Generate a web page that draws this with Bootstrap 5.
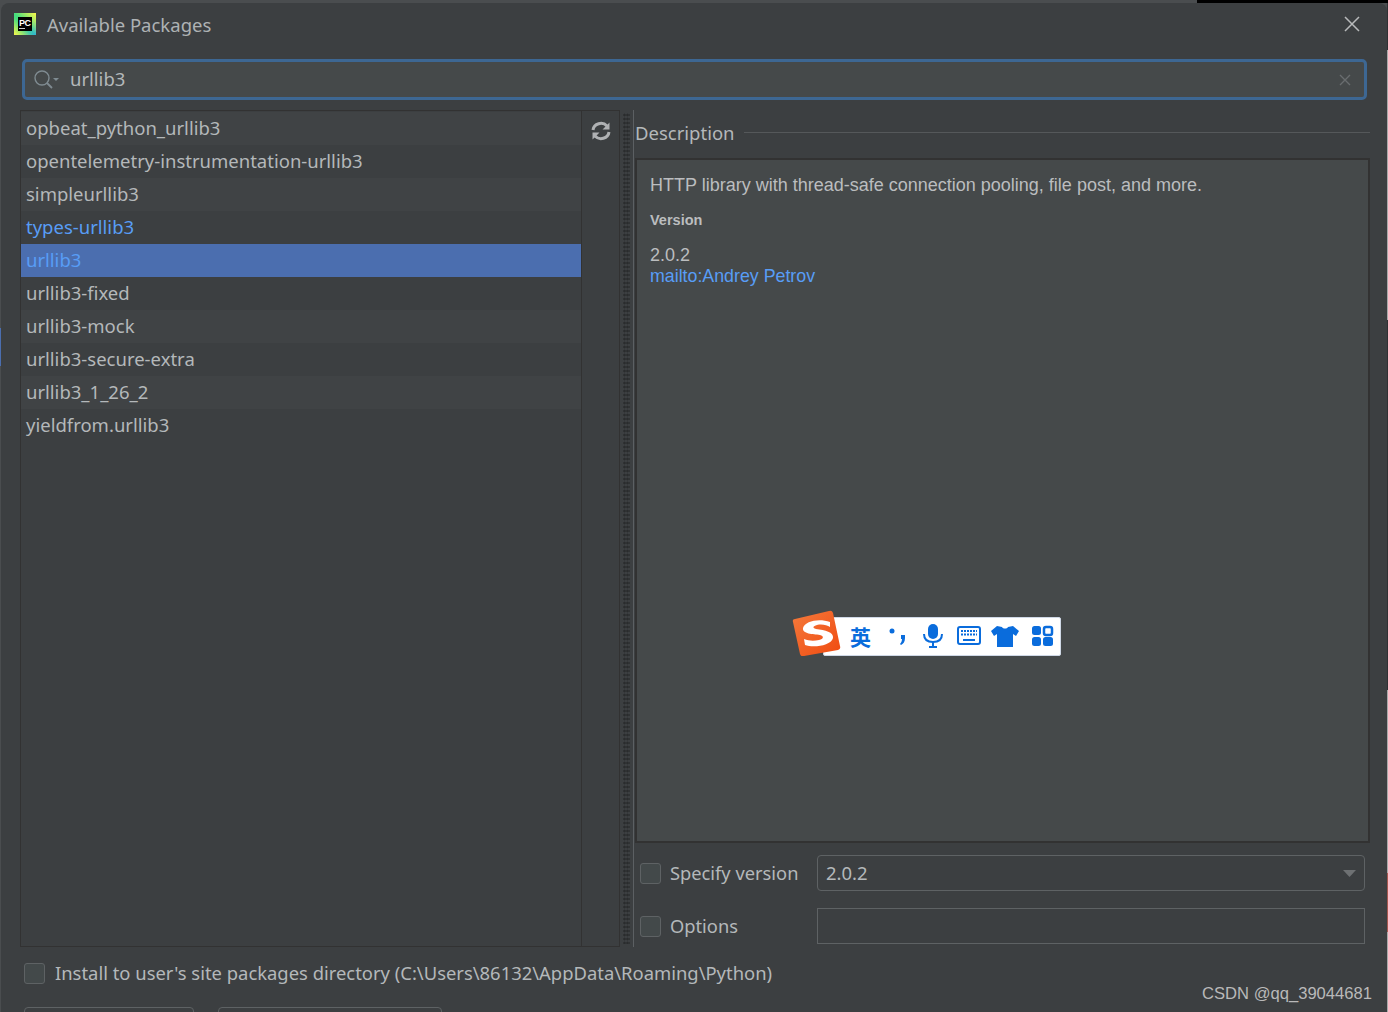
<!DOCTYPE html>
<html lang="en">
<head>
  <meta charset="UTF-8" />
  <title>Available Packages</title>
  <link href="https://cdn.jsdelivr.net/npm/bootstrap@5.3.3/dist/css/bootstrap.min.css" rel="stylesheet">
  <style>
    html, body { height: 100%; overflow: hidden; }
    body {
      font-family: "Noto Sans", "Open Sans", sans-serif; color: #b4b8ba; font-size: 18.5px; line-height: 1.2;
      background:
        linear-gradient(#000, #000) right top / 191px 3px no-repeat,
        linear-gradient(#4b6eaf, #4b6eaf) left 328px / 1px 38px no-repeat,
        linear-gradient(#2f3133 50px, #a9a9a9 50px, #a9a9a9 320px, #2f3133 320px, #2f3133 690px, #a9a9a9 690px, #a9a9a9 873px, #a5574f 873px, #a5574f 932px, #a9a9a9 932px) right top / 1px 100% no-repeat,
        #4a4d4f;
    }
    .dlg { height: 1009px; margin: 3px 1px 0 1px; background: #3c3f41; border-radius: 8px 8px 0 0; position: relative; overflow: hidden; }
    .dlg-head { height: 45px; padding: 0 27px 4px 13px; }
    .dlg-title { color: #aeb2b4; margin-left: 11px; padding-top: 3px; }
    .search-box { height: 41px; margin: 11px 20px 0 21px; background: #45494a; border: 3px solid #3d6793; border-radius: 5px; padding: 0 9px; }
    .search-box span { margin-left: 10px; color: #b4b8ba; }
    .main-area { height: 837px; margin: 10px 17px 0 19px; }
    .pkg-pane { width: 600px; border: 1px solid #323232; border-right-width: 0; }
    .pkg-list { width: 561px; background: #3c3f41; border-right: 1px solid #323232; padding-top: 1px; flex-shrink: 0; }
    .pkg-row { height: 33px; line-height: 31px; padding-left: 5px; white-space: nowrap; }
    .pkg-row.alt { background: #404345; }
    .pkg-row.installable { color: #589df6; }
    .pkg-row.chosen { background: #4b6eaf; color: #589df6; }
    .pkg-tools { width: 39px; padding-top: 7px; border-right: 1px solid #323232; }
    .split-bar { width: 14px; border-right: 1px solid #5c6063; padding: 3px; }
    .split-dots { width: 7px; height: 100%; background-image: radial-gradient(#2a2c2d 1px, transparent 1.2px); background-size: 3px 4px; }
    .desc-side { width: 736px; padding-left: 1px; }
    .desc-legend { height: 48px; padding-bottom: 1px; }
    .desc-legend hr { border-color: #55585a; opacity: 1; margin: 0 0 3px 9px; }
    .desc-box { height: 685px; background: #45494a; border: 2px solid #323232; padding: 15px 13px; font-family: "Liberation Sans", Arial, sans-serif; font-size: 18px; color: #bbbdbf; }
    .desc-box b { display: block; font-size: 14.5px; margin: 15px 0 16px; }
    .desc-box a { color: #589df6; text-decoration: none; display: block; font-size: 17.8px; margin-top: -1px; }
    .opt-row { height: 36px; padding-left: 5px; }
    .fake-check { width: 21px; height: 21px; background: #43494a; border: 1px solid #5e6264; border-radius: 3px; flex-shrink: 0; }
    .opt-label { width: 147px; margin-left: 9px; font-size: 18.3px; }
    .opt-field { width: 548px; height: 36px; border: 1px solid #5e6264; padding: 0 8px; }
    .opt-field.combo { border-radius: 4px; }
    .opt-first { margin-top: 12px; }
    .opt-second { margin-top: 17px; }
    .site-row { margin: 15px 0 0 23px; font-size: 18.42px; }
    .site-row span { margin-left: 10px; }
    .foot-btns { position: absolute; left: 23px; top: 1004px; }
    .foot-btn { height: 30px; border: 1px solid #5e6264; border-radius: 4px; background: #3c3f41; }
    .ime-bar { position: absolute; left: 791px; top: 607px; width: 270px; height: 49px; }
    .ime-strip { position: absolute; left: 32px; top: 10px; width: 238px; height: 39px; background: #fff; border: 1px solid #cfd8e6; border-radius: 2px; padding-left: 26px; color: #0a6cdc; }
    .ime-strip .hz { font-family: "Noto Sans CJK SC", sans-serif; font-weight: 700; font-size: 21px; width: 35px; flex-shrink: 0; }
    .ime-logo { position: absolute; left: 0; top: 0; }
    .wm { position: absolute; left: 1202px; top: 984px; font-family: "Liberation Sans", Arial, sans-serif; font-size: 16.6px; color: #b9b9b9; }
  </style>
</head>
<body>
  <div class="dlg d-flex flex-column">
    <div class="dlg-head d-flex align-items-center justify-content-between">
      <div class="d-flex align-items-center">
        <svg width="22" height="22" viewBox="0 0 22 22">
          <defs>
            <linearGradient id="pcg" x1="0" y1="0" x2="1" y2="1"><stop offset="0" stop-color="#21d789"/><stop offset="0.55" stop-color="#21d789"/><stop offset="1" stop-color="#07a6f2"/></linearGradient>
            <linearGradient id="pcy" x1="1" y1="0" x2="0.4" y2="0.6"><stop offset="0" stop-color="#fcf84a"/><stop offset="1" stop-color="#fcf84a" stop-opacity="0"/></linearGradient>
            <linearGradient id="pcb" x1="0" y1="1" x2="0.5" y2="0.5"><stop offset="0" stop-color="#fcf84a"/><stop offset="1" stop-color="#fcf84a" stop-opacity="0"/></linearGradient>
          </defs>
          <rect width="22" height="22" fill="url(#pcg)"/>
          <rect width="22" height="22" fill="url(#pcy)"/>
          <rect width="22" height="22" fill="url(#pcb)"/>
          <rect x="4" y="4" width="14" height="14" fill="#000"/>
          <text x="5" y="12.500" font-family="Liberation Sans" font-weight="700" font-size="9" fill="#fff" textLength="12">PC</text>
          <rect x="5" y="15" width="6" height="1" fill="#ccc"/>
        </svg>
        <span class="dlg-title">Available Packages</span>
      </div>
      <svg width="16" height="16" viewBox="0 0 16 16"><path d="M1 1 15 15M15 1 1 15" stroke="#b8babb" stroke-width="1.500" fill="none"/></svg>
    </div>

    <div class="search-box d-flex align-items-center">
      <svg width="26" height="20" viewBox="0 0 26 20" class="flex-shrink-0"><circle cx="8" cy="8" r="7" stroke="#7f8b91" stroke-width="1.400" fill="none"/><path d="M13 13 18 18" stroke="#7f8b91" stroke-width="1.800"/><path d="M19 8h6l-3 3z" fill="#7f8b91"/></svg>
      <span class="flex-grow-1">urllib3</span>
      <svg width="12" height="12" viewBox="0 0 12 12" class="me-1"><path d="M1 1 11 11M11 1 1 11" stroke="#696d6f" stroke-width="1.400"/></svg>
    </div>

    <div class="main-area d-flex">
      <div class="pkg-pane d-flex">
        <div class="pkg-list">
          <div class="pkg-row alt">opbeat_python_urllib3</div>
          <div class="pkg-row">opentelemetry-instrumentation-urllib3</div>
          <div class="pkg-row alt">simpleurllib3</div>
          <div class="pkg-row installable">types-urllib3</div>
          <div class="pkg-row chosen">urllib3</div>
          <div class="pkg-row">urllib3-fixed</div>
          <div class="pkg-row alt">urllib3-mock</div>
          <div class="pkg-row">urllib3-secure-extra</div>
          <div class="pkg-row alt">urllib3_1_26_2</div>
          <div class="pkg-row">yieldfrom.urllib3</div>
        </div>
        <div class="pkg-tools text-center">
          <svg width="20" height="20" viewBox="0 0 20 20"><path d="M2 9a8 7.500 0 0 1 14-4M18 11a8 7.500 0 0 1-14 4" stroke="#afb1b3" stroke-width="3" fill="none"/><path d="M18.500 1.500v7h-7zM1.500 18.500v-7h7z" fill="#afb1b3"/></svg>
        </div>
      </div>
      <div class="split-bar"><div class="split-dots"></div></div>
      <div class="desc-side">
        <div class="desc-legend d-flex align-items-center">
          <span>Description</span><hr class="flex-grow-1">
        </div>
        <div class="desc-box">
          <div>HTTP library with thread-safe connection pooling, file post, and more.</div>
          <b>Version</b>
          <div>2.0.2</div>
          <a href="#">mailto:Andrey Petrov</a>
        </div>
        <div class="opt-row opt-first d-flex align-items-center">
          <div class="fake-check"></div><div class="opt-label">Specify version</div>
          <div class="opt-field combo d-flex align-items-center justify-content-between">2.0.2
            <svg width="13" height="7" viewBox="0 0 13 7" class="me-0"><path d="M0 0h13L6.500 7z" fill="#6e7173"/></svg>
          </div>
        </div>
        <div class="opt-row opt-second d-flex align-items-center">
          <div class="fake-check"></div><div class="opt-label">Options</div>
          <div class="opt-field"></div>
        </div>
      </div>
    </div>

    <div class="site-row d-flex align-items-center">
      <div class="fake-check"></div><span>Install to user's site packages directory (C:\Users\86132\AppData\Roaming\Python)</span>
    </div>

    <div class="foot-btns d-flex gap-4">
      <div class="foot-btn" style="width:170px"></div>
      <div class="foot-btn" style="width:224px"></div>
    </div>
  </div>

  <div class="ime-bar">
    <div class="ime-strip d-flex align-items-center">
      <span class="hz">英</span>
      <svg width="176" height="26" viewBox="0 0 176 26" fill="#0a6cdc" class="flex-shrink-0">
        <circle cx="7" cy="7" r="2.500"/><path d="M16 11h4v3c0 4-2 6-4 7l-1-1c1-1 2-3 2-5h-1z"/>
        <rect x="43" y="0" width="10" height="15" rx="5"/><path d="M39 10c0 5 3 8 9 8s9-3 9-8" stroke="#0a6cdc" stroke-width="2" fill="none"/><rect x="47" y="18" width="2" height="4"/><rect x="44" y="22" width="8" height="2"/>
        <rect x="73" y="3" width="22" height="17" rx="2" fill="none" stroke="#0a6cdc" stroke-width="2"/><path d="M76 7h16M76 10.500h16" stroke="#0a6cdc" stroke-width="2" stroke-dasharray="2 1"/><rect x="78" y="15" width="12" height="2"/>
        <path d="M112 2l5 1c1 2 5 2 6 0l5-1 6 5-3 5-3-2v13h-16V10l-3 2-3-5z"/>
        <rect x="147" y="2" width="9" height="9" rx="2.500"/><rect x="159" y="3" width="8" height="8" rx="2" fill="none" stroke="#0a6cdc" stroke-width="2.500"/><rect x="147" y="13" width="9" height="9" rx="2.500"/><rect x="158" y="13" width="10" height="9" rx="2.500"/>
      </svg>
    </div>
    <svg class="ime-logo" width="52" height="49" viewBox="0 0 52 49">
      <defs><linearGradient id="sg" x1="0" y1="0" x2="1" y2="1"><stop offset="0" stop-color="#f47a3c"/><stop offset="1" stop-color="#f04a10"/></linearGradient></defs>
      <path d="M4 12 38 4q3-1 4 2l7 33q1 3-2 4L13 49q-3 1-4-2L2 15q-1-3 2-3z" fill="url(#sg)"/>
      <path d="M39 15C28 11 14 14 12 21c-1 6 10 6 17 7 4 1 4 4-1 5-5 1-10 1-15-1l1 6c8 3 26 1 28-7 1-6-8-8-17-9-4-1-3-3 1-4 5-1 10 0 13 2z" fill="#fff"/>
    </svg>
  </div>

  <div class="wm">CSDN @qq_39044681</div>
</body>
</html>
